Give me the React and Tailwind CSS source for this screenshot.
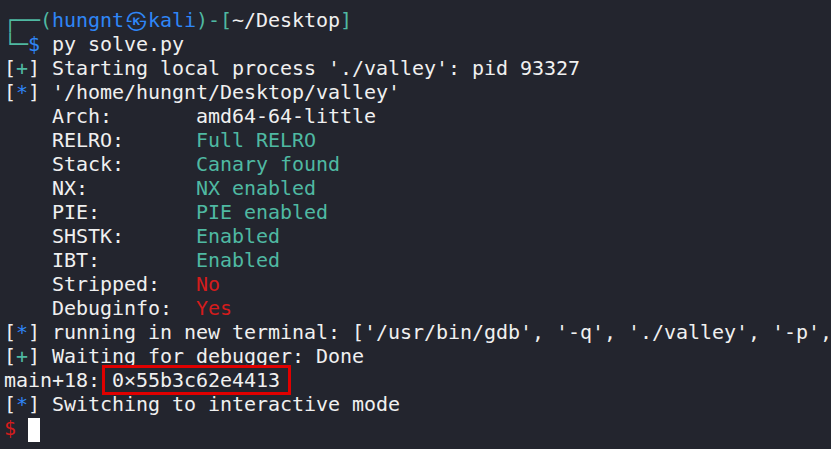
import React from 'react';

const teal = 'text-[#4fb9a2]';
const blue = 'text-[#2f86f6]';
const red = 'text-[#d41c1c]';

function Tag({ sym }) {
  return (
    <>
      [<span className={sym === '+' ? teal : blue}>{sym}</span>]
    </>
  );
}

function Line({ children }) {
  return <div className="h-6 leading-6 whitespace-pre">{children}</div>;
}

const checks = [
  ['Arch:', 'amd64-64-little', ''],
  ['RELRO:', 'Full RELRO', teal],
  ['Stack:', 'Canary found', teal],
  ['NX:', 'NX enabled', teal],
  ['PIE:', 'PIE enabled', teal],
  ['SHSTK:', 'Enabled', teal],
  ['IBT:', 'Enabled', teal],
  ['Stripped:', 'No', red],
  ['Debuginfo:', 'Yes', red],
];

export default function App() {
  return (
    <div
      className="w-[831px] h-[449px] overflow-hidden bg-[#23252e] text-[#f0f0f0] pt-2 pl-1 text-[20px] tracking-[-0.04px]"
      style={{ fontFamily: '"DejaVu Sans Mono", "Liberation Mono", monospace' }}
    >
      <Line>
        <span className={teal}>┌──(</span>
        <span className={blue}>hungnt</span>
        <span className={`inline-block w-6 h-6 text-center align-top text-[23px] leading-6 ${blue}`}>㉿</span>
        <span className={blue}>kali</span>
        <span className={teal}>)-[</span>
        ~/Desktop
        <span className={teal}>]</span>
      </Line>
      <Line>
        <span className={teal}>└─</span>
        <span className={blue}>$</span> py solve.py
      </Line>
      <Line>
        <Tag sym="+" /> Starting local process './valley': pid 93327
      </Line>
      <Line>
        <Tag sym="*" /> '/home/hungnt/Desktop/valley'
      </Line>
      {checks.map(([k, v, c]) => (
        <Line key={k}>
          {'    ' + k.padEnd(12, ' ')}
          <span className={c}>{v}</span>
        </Line>
      ))}
      <Line>
        <Tag sym="*" /> running in new terminal: ['/usr/bin/gdb', '-q', './valley', '-p',
      </Line>
      <Line>
        <Tag sym="+" /> Waiting for debugger: Done
      </Line>
      <Line>
        main+18:{' '}
        <span className="relative">
          0×55b3c62e4413
          <span className="absolute -left-[10px] -right-[11px] -top-[3px] -bottom-[3px] border-[3px] border-[#e00000]" />
        </span>
      </Line>
      <Line>
        <Tag sym="*" /> Switching to interactive mode
      </Line>
      <Line>
        <span className={red}>$</span>{' '}
        <span className="inline-block w-3 h-6 bg-white align-top mt-[2px]" />
      </Line>
    </div>
  );
}
